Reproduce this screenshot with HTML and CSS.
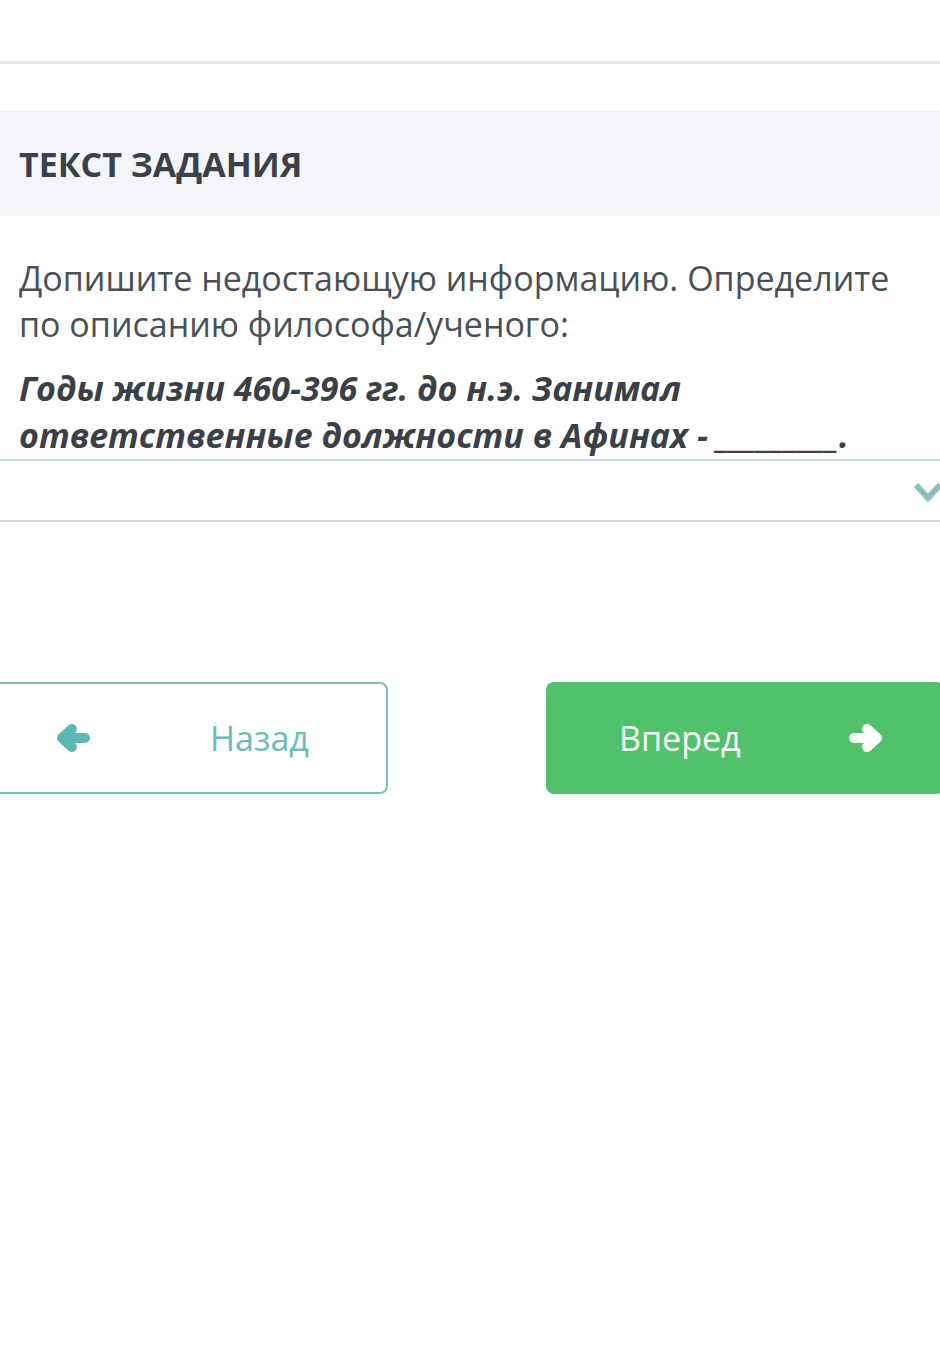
FILE: index.html
```html
<!DOCTYPE html>
<html lang="ru">
<head>
    <meta charset="UTF-8">
    <meta name="viewport" content="width=device-width, initial-scale=1.0">
    <title>Текст задания</title>
    <link rel="stylesheet" href="styles.css">
</head>
<body>

    <div class="top-bar"></div>

    <div class="task-header">
        <h2>ТЕКСТ ЗАДАНИЯ</h2>
    </div>

    <div class="task-body">
        <p class="task-text">Допишите недостающую информацию. Определите по описанию философа/ученого:</p>
        <p class="task-question">Годы жизни 460-396 гг. до н.э. Занимал ответственные должности в Афинах - _________.</p>
    </div>

    <div class="answer-select">
        <svg class="chevron" viewBox="0 0 30 20" width="30" height="20">
            <polyline points="3,3 15,16 27,3" fill="none" stroke="#8fbfc2" stroke-width="6"/>
        </svg>
    </div>

    <div class="nav-buttons">
        <button class="btn btn-back" type="button">
            <svg viewBox="0 0 34 30" width="34" height="30">
                <path d="M16 6 L6 15 L16 24 M6 15 H29" fill="none" stroke="#5bb8b2" stroke-width="10" stroke-linecap="round" stroke-linejoin="round"/>
            </svg>
            <span>Назад</span>
        </button>
        <button class="btn btn-next" type="button">
            <span>Вперед</span>
            <svg viewBox="0 0 34 30" width="34" height="30">
                <path d="M18 6 L28 15 L18 24 M28 15 H5" fill="none" stroke="#ffffff" stroke-width="10" stroke-linecap="round" stroke-linejoin="round"/>
            </svg>
        </button>
    </div>

</body>
</html>
```

FILE: styles.css
```css
body {
    font-family: 'Open Sans', 'Noto Sans', sans-serif;
    background-color: #ffffff;
    margin: 0;
    padding: 0;
    overflow: hidden;
}

.top-bar {
    height: 61px;
    border-bottom: 3px solid #e6e7e8;
}

.task-header {
    margin-top: 47px;
    height: 105px;
    background-color: #f3f5f8;
    display: flex;
    align-items: center;
    padding-left: 19px;
}

.task-header h2 {
    margin: 0;
    font-size: 34px;
    font-weight: 700;
    color: #3b414b;
}

.task-body {
    padding: 0 40px 0 19px;
    margin-top: 39px;
}

.task-text {
    margin: 0;
    font-size: 34px;
    line-height: 46px;
    color: #4a4f57;
}

.task-question {
    margin: 18px 0 0;
    font-size: 34px;
    line-height: 47px;
    font-weight: 700;
    font-style: italic;
    color: #3b3f47;
}

.answer-select {
    height: 59px;
    border-top: 2px solid #cddcdc;
    border-bottom: 2px solid #cddcdc;
    display: flex;
    align-items: center;
    justify-content: flex-end;
    margin-right: -3px;
}

.chevron {
    margin-top: 2px;
}

.nav-buttons {
    display: flex;
    gap: 158px;
    margin: 160px -10px 0 -10px;
}

.btn {
    width: 398px;
    height: 112px;
    flex-shrink: 0;
    border-radius: 8px;
    font-family: 'Open Sans', 'Noto Sans', sans-serif;
    font-size: 34px;
    display: flex;
    align-items: center;
    cursor: pointer;
}

.btn-back {
    background-color: #ffffff;
    border: 2px solid #7fbcbd;
    color: #6bbcb9;
    padding: 0 0 0 64px;
}

.btn-back span {
    margin-left: 120px;
}

.btn-next {
    background-color: #52c16b;
    border: none;
    color: #ffffff;
    padding: 0 0 0 73px;
}

.btn-next span {
    margin-right: 108px;
}
```
